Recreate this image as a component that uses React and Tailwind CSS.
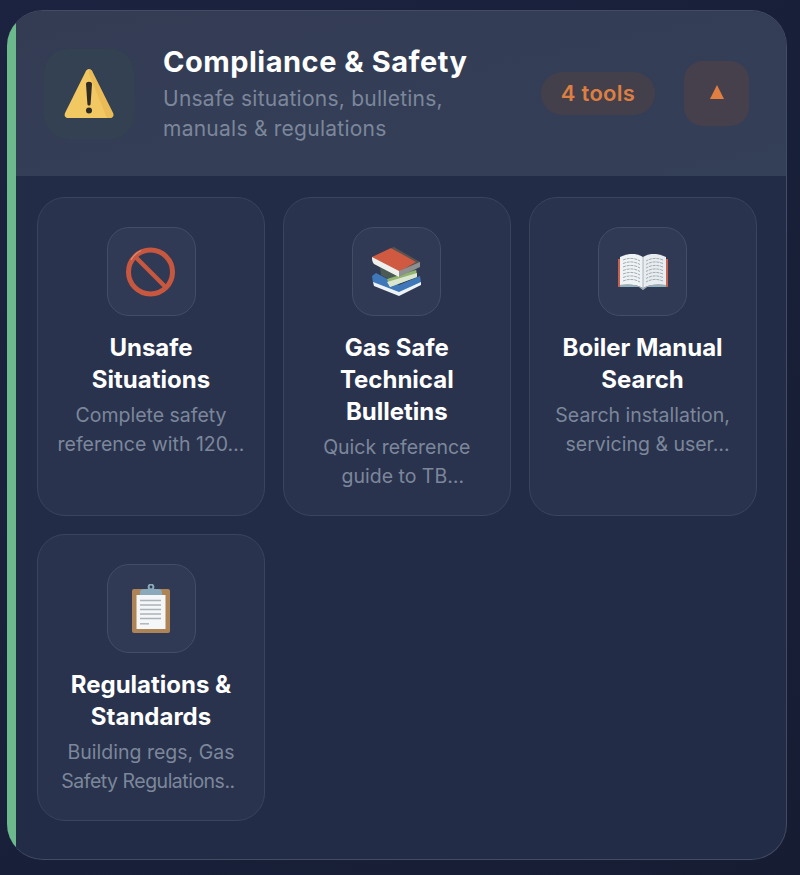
import React from "react";

function WarningIcon() {
  return (
    <svg width="52" height="52" viewBox="0 0 52 52">
      <path d="M26 1 C27.5 1 28.5 2 29.2 3.2 L50 45 C51 47.5 50 50 47 50 L5 50 C2 50 1 47.5 2 45 L22.8 3.2 C23.5 2 24.5 1 26 1 Z" fill="#f2c862" />
      <path d="M26 1 C27.5 1 28.5 2 29.2 3.2 L50 45 C51 47.5 50 50 47 50 L44 50 L26 6 Z" fill="#e3b04f" opacity="0.55" />
      <path d="M23 16 C23 13 29 13 29 16 L27.6 36 C27.5 38 24.5 38 24.4 36 Z" fill="#2f2c28" />
      <circle cx="26" cy="42.5" r="3" fill="#2f2c28" />
    </svg>
  );
}

function NoEntryIcon() {
  return (
    <svg width="52" height="52" viewBox="0 0 52 52">
      <circle cx="25.5" cy="26" r="22" fill="none" stroke="#c8573f" strokeWidth="5" />
      <path d="M10 10.5 L41 41.5" stroke="#c8573f" strokeWidth="4.5" />
      <path d="M6 14 A23.5 23.5 0 0 1 16 4.5" fill="none" stroke="#de8a75" strokeWidth="1.2" />
    </svg>
  );
}

function BooksIcon() {
  return (
    <svg width="52" height="50" viewBox="0 0 52 50">
      <path d="M1 29 L5 26 L28 38 L49 29 L50 36 L28 47 L2 36 Z" fill="#3f78b8" />
      <path d="M2 35 L28 45 L50 35 L50 38 L28 49 L3 39 Z" fill="#eef3f6" />
      <path d="M9 20 L18 16 L46 23 L46 29 L26 37 L10 28 Z" fill="#4a5a55" />
      <path d="M16 32 L45 23 L46 30 L19 40 Z" fill="#8fb56f" />
      <path d="M16 35 L46 26 L46 30 L19 40 Z" fill="#dbe6d0" />
      <path d="M1 10 L20 1 L48 15 L28 25 Z" fill="#cf5a41" />
      <path d="M20 1 L23 0 L49 15 L49 17 L28 25 L45 15 Z" fill="#5a5350" />
      <path d="M1 10 L28 24 L28 30 L3 17 C1 15 1 12 1 10 Z" fill="#eef0ee" />
      <path d="M28 24 L49 15 L49 20 L28 30 Z" fill="#8d8f90" />
    </svg>
  );
}

function OpenBookIcon() {
  return (
    <svg width="52" height="38" viewBox="0 0 52 38">
      <path d="M1 6 L51 6 L51 34 L30 34 L26 37 L22 34 L1 34 Z" fill="#c7604c" />
      <path d="M3 4 C11 0 20 0 26 4 L26 35 C20 31 10 31 3 32 Z" fill="#eef3f5" />
      <path d="M49 4 C41 0 32 0 26 4 L26 35 C32 31 42 31 49 32 Z" fill="#e6ecef" />
      <path d="M3 32 C10 31 20 31 26 35 C32 31 42 31 49 32 L49 34 L30 34 L26 37 L22 34 L3 34 Z" fill="#8fb0bd" />
      <path d="M26 4 L26 35" stroke="#9aa6ac" strokeWidth="0.8" />
      <g stroke="#a3acb1" strokeWidth="1" strokeDasharray="3 0.8" fill="none">
        <path d="M6 7 C12 4.5 18 5 23 8" />
        <path d="M6 10.5 C12 8 18 8.5 23 11.5" />
        <path d="M6 14 C12 11.5 18 12 23 15" />
        <path d="M6 17.5 C12 15 18 15.5 23 18.5" />
        <path d="M6 21 C12 18.5 18 19 23 22" />
        <path d="M6 24.5 C12 22 18 22.5 23 25.5" />
        <path d="M6 28 C12 25.5 18 26 23 29" />
        <path d="M46 7 C40 4.5 34 5 29 8" />
        <path d="M46 10.5 C40 8 34 8.5 29 11.5" />
        <path d="M46 14 C40 11.5 34 12 29 15" />
        <path d="M46 17.5 C40 15 34 15.5 29 18.5" />
        <path d="M46 21 C40 18.5 34 19 29 22" />
        <path d="M46 24.5 C40 22 34 22.5 29 25.5" />
        <path d="M46 28 C40 25.5 34 26 29 29" />
      </g>
    </svg>
  );
}

function ClipboardIcon() {
  return (
    <svg width="40" height="50" viewBox="0 0 40 50">
      <rect x="1" y="5" width="38" height="44" rx="2" fill="#ae8356" />
      <rect x="5.5" y="11" width="29" height="34" fill="#f4f6f7" />
      <path d="M9 16.5 H30 M9 21 H30 M9 25.5 H30 M9 30 H30 M9 34.5 H30" stroke="#aab3b8" strokeWidth="1.4" />
      <path d="M9 39.8 H18" stroke="#aab3b8" strokeWidth="1.4" />
      <circle cx="20" cy="3" r="2.4" fill="none" stroke="#8aa9ba" strokeWidth="2" />
      <path d="M9 11 L9 8 C9 6 11 5 13 5 L27 5 C29 5 31 6 31 8 L31 11 Z" fill="#8aa9ba" />
    </svg>
  );
}

function ToolCard({ icon, title, desc }) {
  return (
    <div className="flex flex-col items-center rounded-[28px] border border-[#3a445c] bg-[#2a334d] px-2 pt-[29px] pb-[25px] text-center">
      <div className="flex h-[89px] w-[89px] items-center justify-center rounded-[22px] border border-[#434d66] bg-[#313a54]">
        {icon}
      </div>
      <div className="mt-4 text-[24px] leading-[32px] font-bold text-white">
        {title.map((line) => (
          <div key={line} className="whitespace-nowrap">{line}</div>
        ))}
      </div>
      <div className="mt-[5px] text-[19.5px] leading-[28.5px] text-[#7c879b]">
        {desc.map(([line, extra]) => (
          <div key={line} className={`whitespace-nowrap ${extra || ""}`}>{line}</div>
        ))}
      </div>
    </div>
  );
}

export default function App() {
  return (
    <div className="h-[875px] bg-gradient-to-br from-[#1b2340] to-[#161d33] pt-[10px] pl-[7px] font-['Inter',sans-serif]">
      <div className="flex h-[850px] w-[780px] overflow-hidden rounded-[36px] border border-l-0 border-[#434c63] bg-[#222c46]">
        <div className="w-[9px] shrink-0 bg-[#6cb98c]" />
        <div className="flex-1">
          <div className="flex h-[165px] items-center bg-gradient-to-br from-[#333c53] to-[#343f58] pl-7 pr-[37px]">
            <div className="flex h-[90px] w-[90px] shrink-0 items-center justify-center rounded-[24px] bg-[#334152]">
              <WarningIcon />
            </div>
            <div className="ml-[29px] flex-1">
              <div className="text-[29px] leading-[36px] font-bold tracking-[0.5px] text-white">Compliance &amp; Safety</div>
              <div className="mt-[4px] text-[21px] leading-[30px] tracking-[0.25px] text-[#7c879b]">
                Unsafe situations, bulletins,
                <br />
                manuals &amp; regulations
              </div>
            </div>
            <div className="flex h-[43px] w-[114px] items-center justify-center rounded-full bg-[#43404b] text-[22px] font-semibold tracking-[0.3px] text-[#dd7f42]">
              4 tools
            </div>
            <button className="ml-[29px] flex h-[65px] w-[65px] items-center justify-center rounded-[19px] bg-[#46404c]">
              <svg className="mb-[3px]" width="14" height="14" viewBox="0 0 14 14"><path d="M7 0 L14 14 L0 14 Z" fill="#e07f40" /></svg>
            </button>
          </div>
          <div className="grid grid-cols-[repeat(3,228px)] gap-x-[17.8px] gap-y-[18px] pt-[21px] pl-[21px]">
            <ToolCard icon={<NoEntryIcon />} title={["Unsafe", "Situations"]} desc={[["Complete safety"], ["reference with 120…"]]} />
            <ToolCard icon={<BooksIcon />} title={["Gas Safe", "Technical", "Bulletins"]} desc={[["Quick reference"], ["guide to TB…", "pl-[12px]"]]} />
            <ToolCard icon={<OpenBookIcon />} title={["Boiler Manual", "Search"]} desc={[["Search installation,"], ["servicing & user…", "pl-[10px]"]]} />
            <ToolCard icon={<ClipboardIcon />} title={["Regulations &", "Standards"]} desc={[["Building regs, Gas"], ["Safety Regulations..", "pr-[6px] tracking-[-0.5px]"]]} />
          </div>
        </div>
      </div>
    </div>
  );
}
